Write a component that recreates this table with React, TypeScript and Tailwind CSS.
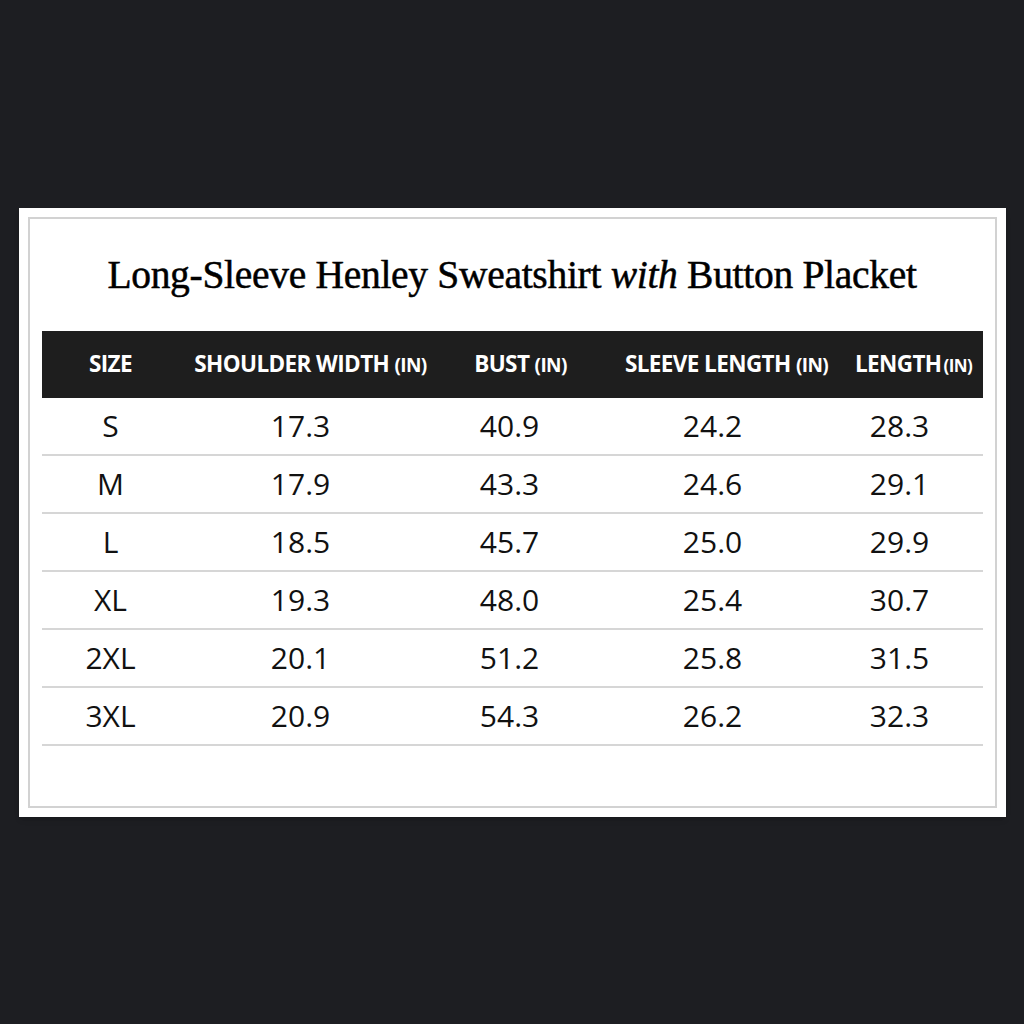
import React from "react";

const rows = [
  ["S", "17.3", "40.9", "24.2", "28.3"],
  ["M", "17.9", "43.3", "24.6", "29.1"],
  ["L", "18.5", "45.7", "25.0", "29.9"],
  ["XL", "19.3", "48.0", "25.4", "30.7"],
  ["2XL", "20.1", "51.2", "25.8", "31.5"],
  ["3XL", "20.9", "54.3", "26.2", "32.3"],
];

const cols = "grid grid-cols-[138px_252px_166px_244px_136px]";
// values sit a little left of their header labels
const valuePad = ["", "pr-[10px]", "pr-[10px]", "pr-[14px]", "pr-[20px]"];

const App: React.FC = () => {
  return (
    <div className="w-full h-screen bg-[#1d1e22] flex items-center justify-center">
      <div className="w-[987px] h-[609px] bg-white p-[9px] shadow-md">
        <div className="h-full border-2 border-[#d2d2d2] px-[12px] flex flex-col">
          {/* Title */}
          <div className="h-[112px] flex items-center justify-center pt-[2px]">
            <h1
              className="text-[39.5px] text-black leading-none tracking-[-0.3px] [-webkit-text-stroke:0.5px_black]"
              style={{ fontFamily: '"Liberation Serif", "DejaVu Serif", serif' }}
            >
              Long-Sleeve Henley Sweatshirt <em className="italic">with</em> Button Placket
            </h1>
          </div>

          {/* Table header */}
          <div
            className={`${cols} h-[67px] items-center bg-[#1e1e1e] text-white font-bold text-[22.5px] tracking-[-0.6px]`}
            style={{ fontFamily: '"Open Sans", "Noto Sans", sans-serif' }}
          >
            <div className="text-center">SIZE</div>
            <div className="text-center pl-[10px] whitespace-nowrap">
              SHOULDER WIDTH <span className="text-[19px]">(IN)</span>
            </div>
            <div className="text-center pl-[12px] whitespace-nowrap">
              BUST <span className="text-[19px]">(IN)</span>
            </div>
            <div className="text-center pl-[14px] whitespace-nowrap">
              SLEEVE LENGTH <span className="text-[19px]">(IN)</span>
            </div>
            <div className="text-center pl-[8px] whitespace-nowrap">
              LENGTH<span className="text-[17px] ml-[2px]">(IN)</span>
            </div>
          </div>

          {/* Rows */}
          <div
            className="text-[30px] text-[#111]"
            style={{ fontFamily: '"Open Sans", "Noto Sans", sans-serif' }}
          >
            {rows.map((r) => (
              <div
                key={r[0]}
                className={`${cols} h-[58px] items-center border-b-2 border-[#d6d6d6]`}
              >
                {r.map((c, i) => (
                  <div key={i} className={`text-center ${valuePad[i]}`}>
                    {c}
                  </div>
                ))}
              </div>
            ))}
          </div>
        </div>
      </div>
    </div>
  );
};

export default App;
